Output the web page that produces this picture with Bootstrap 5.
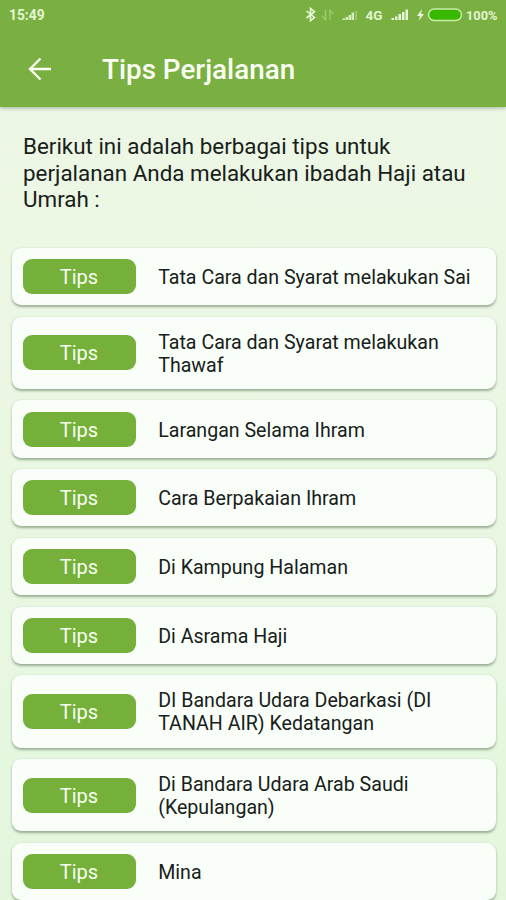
<!DOCTYPE html>
<html lang="id">
<head>
<meta charset="utf-8">
<meta name="viewport" content="width=device-width, initial-scale=1">
<title>Tips Perjalanan</title>
<link href="https://cdn.jsdelivr.net/npm/bootstrap@5.3.0/dist/css/bootstrap.min.css" rel="stylesheet">
<style>
body { font-family: Roboto, "Liberation Sans", sans-serif; height: 900px; color: #17201a; background: linear-gradient(#edf6e4, #ebf7e4 40%, #e4f7de); }
.app-head { background: #79b041; height: 107px; box-shadow: 0 1px 4px rgba(50,80,40,.4); color: #fbfff4; }
.status-bar { height: 30px; padding: 0 8px 0 9px; font-size: 13.8px; font-weight: 700; color: #e3f5d0; }
.title-row { height: 77px; padding: 2px 0 0 28px; }
.title-row svg { margin-top: -2px; }
.app-title { font-size: 27.8px; font-weight: 500; line-height: 32px; margin-left: 50px; }
.intro { font-size: 22.4px; line-height: 26.7px; padding: 26px 23px 0; height: 141px; }
.tip-list { gap: 11.4px; padding: 0 10.5px 0 11.5px; }
.tip { min-height: 57.3px; padding: 11px; border: 0; border-radius: 9px; background: #f9fef8; box-shadow: 0 1.5px 2.5px rgba(70,95,65,.48); color: #17201a; flex-shrink: 0; }
.tip.tall { min-height: 72.4px; padding-top: 0; padding-bottom: 0; }
.tip-btn { width: 113px; height: 35px; border-radius: 9px; background: #75b03b; color: #f8fff0; font-size: 20px; line-height: 37px; }
.tip-text { font-size: 19.6px; line-height: 23px; padding: 2px 0 0 22.7px; }
</style>
</head>
<body class="overflow-hidden">
<header class="app-head position-relative">
  <div class="status-bar d-flex align-items-center justify-content-between">
    <span class="clock">15:49</span>
    <svg width="194" height="30" viewBox="304 0 194 30" fill="none" role="img" aria-label="Status">
      <path d="M306.500 11l8 6.500-4 3.200V8.500l4 3.200-8 6.300" stroke="#e9f8d8" stroke-width="1.600"/>
      <path d="M325.500 10v9.500l-3-3M330 20v-9.500l3 3" stroke="#9ecb70" stroke-width="1.400"/>
      <path d="M342.500 20v-1.500h2.500V20zM345.500 20v-3h2.500v3zM348.500 20v-5h2.500v5zM351.500 20v-7.500h2.500V20z" fill="#d5edbd"/>
      <path d="M354.500 20v-9h3v9z" fill="#93c266"/>
      <path d="M391.500 20v-2h2.500v2zM395 20v-3.500h2.500v3.500zM398.500 20v-6h2.500v6zM402 20v-8h2.500v8zM405.500 20V9.500h2.500V20z" fill="#e9f8d8"/>
      <path d="M422 9l-5 7h3l-1.500 5 5.500-7h-3z" fill="#e9f8d8"/>
      <rect x="428.500" y="9" width="33" height="11.500" rx="5.750" fill="#38b900" stroke="#c9ebac" stroke-width="1.500"/>
      <g fill="#e3f5d0" font-family="Roboto, sans-serif" font-size="13.500" font-weight="700"><text x="365.500" y="19.500" textLength="17" lengthAdjust="spacingAndGlyphs">4G</text><text x="466" y="19.500" textLength="31.500" lengthAdjust="spacingAndGlyphs">100%</text></g>
    </svg>
  </div>
  <div class="title-row d-flex align-items-center">
    <svg width="24" height="24" viewBox="0 0 24 24" fill="none" stroke="#fbfff4" stroke-width="2.400" role="img" aria-label="Kembali"><path d="M23 12H2.500M12.500 1.500L2 12l10.500 10.500"/></svg>
    <h1 class="app-title mb-0">Tips Perjalanan</h1>
  </div>
</header>
<main>
  <p class="intro mb-0">Berikut ini adalah berbagai tips untuk<br>perjalanan Anda melakukan ibadah Haji atau<br>Umrah :</p>
  <div class="tip-list d-flex flex-column">
    <div class="tip card flex-row align-items-center"><span class="tip-btn text-center flex-shrink-0">Tips</span><span class="tip-text">Tata Cara dan Syarat melakukan Sai</span></div>
    <div class="tip tall card flex-row align-items-center"><span class="tip-btn text-center flex-shrink-0">Tips</span><span class="tip-text">Tata Cara dan Syarat melakukan<br>Thawaf</span></div>
    <div class="tip card flex-row align-items-center"><span class="tip-btn text-center flex-shrink-0">Tips</span><span class="tip-text">Larangan Selama Ihram</span></div>
    <div class="tip card flex-row align-items-center"><span class="tip-btn text-center flex-shrink-0">Tips</span><span class="tip-text">Cara Berpakaian Ihram</span></div>
    <div class="tip card flex-row align-items-center"><span class="tip-btn text-center flex-shrink-0">Tips</span><span class="tip-text">Di Kampung Halaman</span></div>
    <div class="tip card flex-row align-items-center"><span class="tip-btn text-center flex-shrink-0">Tips</span><span class="tip-text">Di Asrama Haji</span></div>
    <div class="tip tall card flex-row align-items-center"><span class="tip-btn text-center flex-shrink-0">Tips</span><span class="tip-text">DI Bandara Udara Debarkasi (DI<br>TANAH AIR) Kedatangan</span></div>
    <div class="tip tall card flex-row align-items-center"><span class="tip-btn text-center flex-shrink-0">Tips</span><span class="tip-text">Di Bandara Udara Arab Saudi<br>(Kepulangan)</span></div>
    <div class="tip card flex-row align-items-center"><span class="tip-btn text-center flex-shrink-0">Tips</span><span class="tip-text">Mina</span></div>
  </div>
</main>
<script src="https://cdn.jsdelivr.net/npm/bootstrap@5.3.0/dist/js/bootstrap.bundle.min.js"></script>
</body>
</html>
